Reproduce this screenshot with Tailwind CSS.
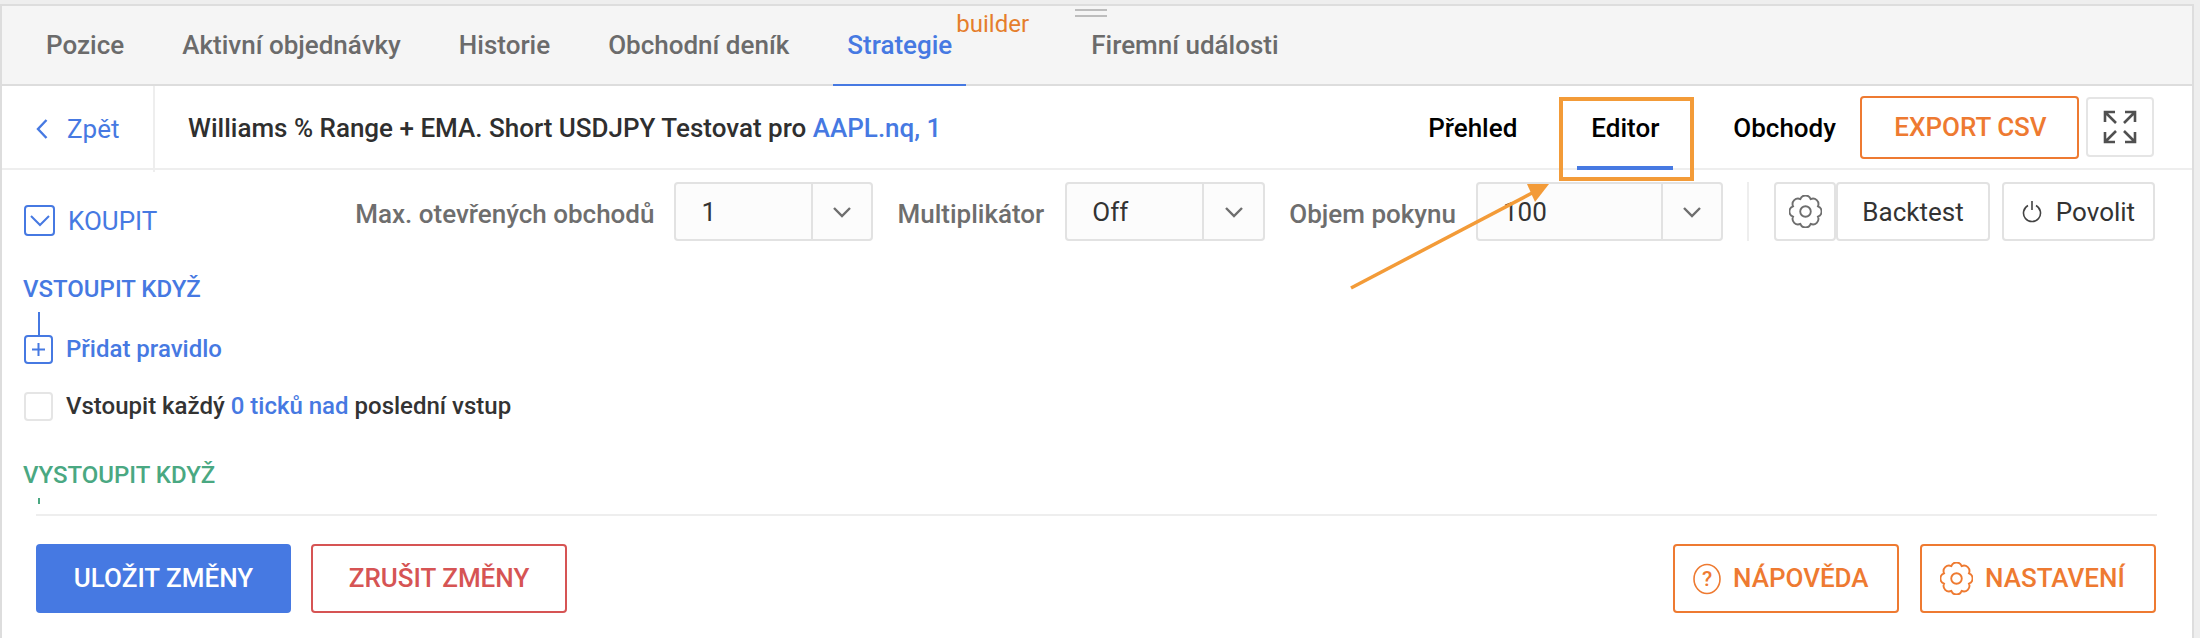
<!DOCTYPE html>
<html lang="cs">
<head>
<meta charset="utf-8">
<script src="https://cdn.jsdelivr.net/npm/@tailwindcss/browser@4"></script>
<title>Strategie</title>
</head>
<body class="m-0 bg-[#eeeeee] font-['Roboto',sans-serif] overflow-hidden">
<div class="relative w-[2200px] h-[638px] pt-[4px] overflow-hidden">
  <div class="w-[2194px] h-[634px] bg-white border-t-2 border-x-2 border-[#dddddd] flex flex-col">

    <!-- Tabs -->
    <nav class="relative shrink-0 h-[80px] bg-[#f5f5f5] border-b-2 border-[#dddddd] flex items-start pl-[30px] text-[26px] font-medium text-[#6b6b6b] leading-[78px]">
      <span class="px-[14px]">Pozice</span>
      <span class="ml-[30px] px-[14px]">Aktivní objednávky</span>
      <span class="ml-[30px] px-[14px]">Historie</span>
      <span class="ml-[30px] px-[14px]">Obchodní deník</span>
      <span class="relative ml-[30px] px-[14px] h-[80px] border-b-2 border-[#4679e2] text-[#4679e2]">Strategie
        <span class="absolute left-[123px] top-[6px] text-[24px] leading-[24px] font-normal text-[#e57e2c]">builder</span>
      </span>
      <span class="ml-[125px]">Firemní události</span>
      <span class="absolute left-[1073px] top-[3px] w-[32px] h-[8px] border-y-2 border-[#bdbdbd]"></span>
    </nav>

    <!-- Header row -->
    <header class="shrink-0 h-[84px] border-b-2 border-[#eeeeee] flex items-center text-[26px] font-medium">
      <a class="w-[153px] h-[86px] -mb-[4px] self-start border-r-2 border-[#eeeeee] flex items-center pl-[34px] gap-[19px] text-[#4679e2] font-normal">
        <svg class="w-[12px] h-[22px]" viewBox="0 0 12 22" fill="none" stroke="currentColor" stroke-width="2.4"><path d="M10.5 2 2 11l8.5 9"/></svg>
        <span>Zpět</span>
      </a>
      <div class="ml-[33px] pt-[2px] text-[#2f2f2f] whitespace-nowrap">Williams % Range + EMA. Short USDJPY Testovat pro <span class="text-[#4679e2]">AAPL.nq, 1</span></div>
      <div class="ml-auto flex items-center pr-[38px] text-black">
        <span class="pt-[2px]">Přehled</span>
        <span class="relative ml-[60px] h-[84px] leading-[84px] w-[96px] text-center border-b-4 border-[#4679e2] -mb-[2px]">Editor</span>
        <span class="ml-[60px] pt-[2px]">Obchody</span>
        <button class="ml-[24px] w-[219px] h-[63px] pl-[2px] rounded-[4px] border-2 border-[#ee7a31] text-[#ee7a31] font-medium">EXPORT CSV</button>
        <button class="ml-[7px] w-[68px] h-[60px] rounded-[4px] border-2 border-[#e5e5e5] flex items-center justify-center">
          <svg class="w-[34px] h-[34px]" viewBox="0 0 34 34" fill="none" stroke="#505050" stroke-width="2.6"><path d="M2 12V2h10M2 2l11 11M32 12V2H22M32 2 21 13M2 22v10h10M2 32l11-11M32 22v10H22M32 32 21 21"/></svg>
        </button>
      </div>
    </header>

    <!-- Editor -->
    <main class="flex-1 flex flex-col">
      <div class="flex items-start pt-[12px] pr-[37px] pl-[22px] h-[71px] shrink-0">
        <div class="mt-[22px] flex items-center gap-[13px] text-[#4679e2] text-[26px] leading-[31px]">
          <span class="w-[31px] h-[31px] rounded-[4px] border-2 border-[#4679e2] flex items-center justify-center">
            <svg class="w-[20px] h-[12px]" viewBox="0 0 20 12" fill="none" stroke="currentColor" stroke-width="2"><path d="m1 1 9 9 9-9"/></svg>
          </span>
          <span class="pt-[2px]">KOUPIT</span>
        </div>
        <div class="ml-auto flex items-start text-[26px] leading-[64px] text-[#6e6e6e] font-medium">
          <span>Max. otevřených obchodů</span>
          <div class="ml-[20px] w-[199px] h-[59px] rounded-[4px] border-2 border-[#e2e2e2] bg-[#fcfcfc] flex font-normal text-[#333333]">
            <span class="flex-1 pl-[25px] leading-[57px]">1</span>
            <span class="w-[60px] border-l-2 border-[#e2e2e2] flex items-center justify-center">
              <svg class="w-[20px] h-[12px]" viewBox="0 0 20 12" fill="none" stroke="#6e6e6e" stroke-width="2.4"><path d="m2 2 8 8 8-8"/></svg>
            </span>
          </div>
          <span class="ml-[24px]">Multiplikátor</span>
          <div class="ml-[21px] w-[200px] h-[59px] rounded-[4px] border-2 border-[#e2e2e2] bg-[#fcfcfc] flex font-normal text-[#333333]">
            <span class="flex-1 pl-[25px] leading-[57px]">Off</span>
            <span class="w-[61px] border-l-2 border-[#e2e2e2] flex items-center justify-center">
              <svg class="w-[20px] h-[12px]" viewBox="0 0 20 12" fill="none" stroke="#6e6e6e" stroke-width="2.4"><path d="m2 2 8 8 8-8"/></svg>
            </span>
          </div>
          <span class="ml-[24px]">Objem pokynu</span>
          <div class="ml-[20px] w-[247px] h-[59px] rounded-[4px] border-2 border-[#e2e2e2] bg-[#fcfcfc] flex font-normal text-[#333333]">
            <span class="flex-1 pl-[25px] leading-[57px]">100</span>
            <span class="w-[60px] border-l-2 border-[#e2e2e2] flex items-center justify-center">
              <svg class="w-[20px] h-[12px]" viewBox="0 0 20 12" fill="none" stroke="#6e6e6e" stroke-width="2.4"><path d="m2 2 8 8 8-8"/></svg>
            </span>
          </div>
          <span class="ml-[24px] w-[2px] h-[59px] bg-[#eeeeee]"></span>
          <button class="ml-[25px] w-[62px] h-[59px] rounded-[4px] border-2 border-[#e2e2e2] flex items-center justify-center">
            <svg class="w-[33px] h-[33px]" viewBox="1 1 30 30" fill="none" stroke="#6e6e6e" stroke-width="1.7"><path d="M11.3 4.7A5 5 0 0 1 20.7 4.700A5 5 0 0 1 27.300 11.300A5 5 0 0 1 27.300 20.700A5 5 0 0 1 20.700 27.300A5 5 0 0 1 11.300 27.300A5 5 0 0 1 4.700 20.700A5 5 0 0 1 4.700 11.300A5 5 0 0 1 11.300 4.700Z"/><circle cx="16" cy="16" r="4.800"/></svg>
          </button>
          <button class="w-[154px] h-[59px] pt-[2px] rounded-[4px] border-2 border-[#e2e2e2] font-normal text-[#333333] leading-[53px]">Backtest</button>
          <button class="ml-[12px] w-[153px] h-[59px] rounded-[4px] border-2 border-[#e2e2e2] font-normal text-[#333333] leading-[53px] flex items-center justify-center gap-[14px]">
            <svg class="w-[20px] h-[24px]" viewBox="0 0 20 24" fill="none" stroke="#444444" stroke-width="1.600"><path d="M6 5.500a8.500 8.500 0 1 0 8 0M10 1v9"/></svg>
            <span class="pt-[2px]">Povolit</span>
          </button>
        </div>
      </div>

      <div class="pl-[20px] shrink-0">
        <div class="ml-[1px] mt-[33px] h-[30px] leading-[30px] text-[24px] font-medium text-[#4679e2]">VSTOUPIT KDYŽ</div>
        <div class="ml-[16px] mt-[8px] w-[2px] h-[23px] bg-[#4679e2]"></div>
        <div class="h-[29px] flex items-center gap-[13px] ml-[2px] leading-[29px]">
          <span class="w-[29px] h-[29px] rounded-[4px] border-2 border-[#4679e2] flex items-center justify-center">
            <svg class="w-[13px] h-[13px]" viewBox="0 0 13 13" stroke="#4679e2" stroke-width="2"><path d="M6.500 0v13M0 6.500h13"/></svg>
          </span>
          <span class="text-[24px] font-medium text-[#4679e2]">Přidat pravidlo</span>
        </div>
        <div class="h-[29px] mt-[28px] flex items-center gap-[13px] ml-[2px] text-[24px] leading-[29px] font-medium text-[#333333]">
          <span class="w-[29px] h-[29px] rounded-[4px] border-2 border-[#e5e5e5]"></span>
          <span>Vstoupit každý <span class="text-[#4679e2]">0 ticků nad</span> poslední vstup</span>
        </div>
        <div class="ml-[1px] mt-[39px] h-[30px] leading-[30px] text-[24px] font-medium text-[#4aa882]">VYSTOUPIT KDYŽ</div>
        <div class="ml-[16px] mt-[8px] w-[2px] h-[6px] bg-[#4aa882]"></div>
      </div>

      <footer class="ml-[34px] mr-[35px] mt-[10px] border-t-2 border-[#eeeeee] pt-[28px] pr-[1px] flex items-start text-[26px] font-medium">
        <button class="w-[255px] h-[69px] rounded-[4px] bg-[#4679e2] text-white">ULOŽIT ZMĚNY</button>
        <button class="ml-[20px] w-[256px] h-[69px] rounded-[4px] border-2 border-[#d65454] text-[#d65454]">ZRUŠIT ZMĚNY</button>
        <button class="ml-auto w-[226px] h-[69px] rounded-[4px] border-2 border-[#ee7a31] text-[#ee7a31] flex items-center pl-[18px] gap-[12px]">
          <svg class="w-[28px] h-[32px]" viewBox="0 0 28 32" fill="none" stroke="currentColor" stroke-width="1.600"><ellipse cx="14" cy="16" rx="13" ry="14.500"/><text x="14" y="23" text-anchor="middle" font-size="21" fill="currentColor" stroke="none" font-family="Roboto">?</text></svg>
          <span>NÁPOVĚDA</span>
        </button>
        <button class="ml-[21px] w-[236px] h-[69px] rounded-[4px] border-2 border-[#ee7a31] text-[#ee7a31] flex items-center pl-[18px] gap-[12px]">
          <svg class="w-[33px] h-[33px]" viewBox="1 1 30 30" fill="none" stroke="currentColor" stroke-width="1.700"><path d="M11.300 4.700A5 5 0 0 1 20.700 4.700A5 5 0 0 1 27.300 11.300A5 5 0 0 1 27.300 20.700A5 5 0 0 1 20.700 27.300A5 5 0 0 1 11.300 27.300A5 5 0 0 1 4.700 20.700A5 5 0 0 1 4.700 11.300A5 5 0 0 1 11.300 4.700Z"/><circle cx="16" cy="16" r="4.800"/></svg>
          <span>NASTAVENÍ</span>
        </button>
      </footer>
    </main>
  </div>

  <!-- Annotation -->
  <div class="absolute left-[1559px] top-[97px] w-[135px] h-[84px] border-4 border-[#f39b38]"></div>
  <svg class="absolute left-0 top-0 pointer-events-none" width="2200" height="638" viewBox="0 0 2200 638">
    <path d="M1351 288 1532 193" stroke="#f39b38" stroke-width="3.500" fill="none"/>
    <path d="M1527 184H1549L1535 202Z" fill="#f39b38"/>
  </svg>
</div>
</body>
</html>
